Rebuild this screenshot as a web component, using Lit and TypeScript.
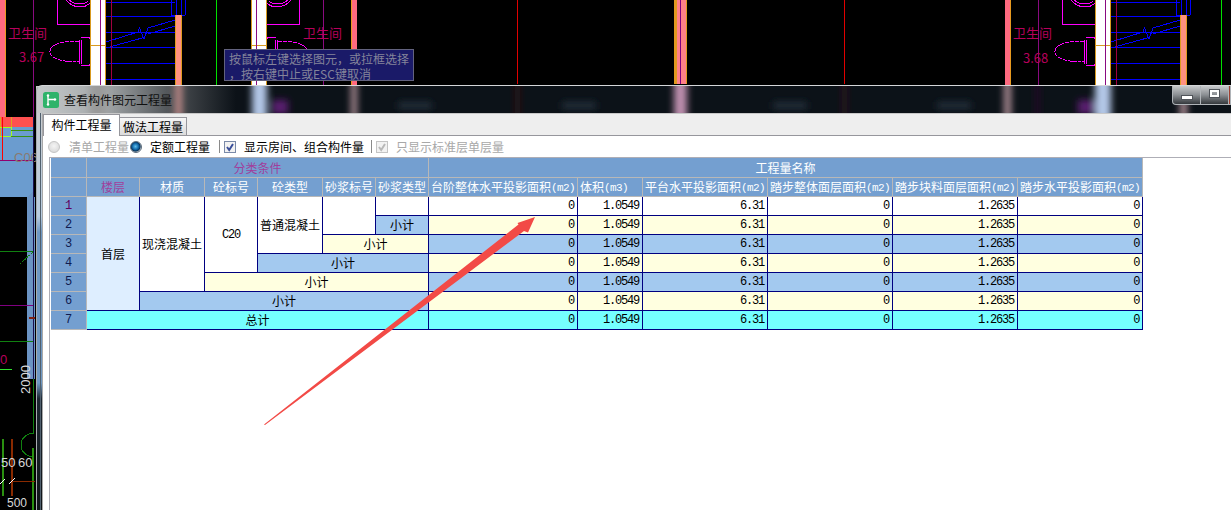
import { LitElement, html, css, svg } from 'lit';
import { customElement } from 'lit/decorators.js';

const CJK = '"Noto Sans CJK SC", "Liberation Sans", sans-serif';
const LATIN = '"Liberation Sans", sans-serif';

// one bathroom of the drawing, mirrored for the middle one
const room = (t: string) => svg`
  <g transform=${t} fill="none">
    <rect x="0" y="0" width="6" height="117" fill="#ff6a80" stroke="none" />
    <rect x="5" y="0" width="1" height="117" fill="#e89a20" stroke="none" />
    <path d="M33.5 0V117" stroke="#8a0a80" />
    <path d="M57.5 0V24.5H90" stroke="#ff00ff" />
    <path d="M66 0Q72 7 80 7Q86 7 90 3M69 0Q74 4 80 4Q85 4 88 1" stroke="#ff00ff" />
    <path d="M79 41C60 41 50 45 50 51.5C50 58 60 62 79 62" stroke="#ff00ff" stroke-dasharray="4 1" />
    <path d="M79.5 39.5V63.5M81.5 39.5V63.5M81 37.5H87Q90 37.5 90 39M81 65.5H87Q90 65.5 90 64" stroke="#ff00ff" />
    <rect x="90" y="0" width="16" height="85" fill="#fff" stroke="none" />
    <path d="M90.5 0V85M105.5 0V85M90 45.5H106" stroke="#d89a20" />
    <path d="M100.5 0V85" stroke="#8a0a80" />
  </g>
`;

const stairs = (t: string) => svg`
  <g transform=${t} fill="none">
    <path d="M106 16.5H175M106 32.5H175M106 47.5H175M106 63.5H175M106 79.5H175M106 2.5H175" stroke="#0000ff" />
    <path d="M106 42L138 32L139.5 28L144 39L148 28L175 20M106 48L144 37.5M148 34L175 26" stroke="#0000ff" />
    <path d="M171.5 0V15M176 0V15M181.5 0V15M185.5 0V15M171 15.5H185" stroke="#0000ff" />
    <path d="M111.5 0V85" stroke="#a00040" />
    <rect x="175" y="15" width="7" height="70" fill="#ff9080" stroke="none" />
    <path d="M175.5 15V85M181.5 15V85" stroke="#e09a20" />
    <path d="M216.5 0V85" stroke="#00e000" />
  </g>
`;

const label = (x: number, y: number, s: string, size = 13) =>
  svg`<text x=${x} y=${y} fill="#b8005c" font-size=${size} font-family=${CJK}>${s}</text>`;

const plain = (x: number, y: number, s: string, size = 12) =>
  svg`<text x=${x} y=${y} fill="#d8d8d8" font-size=${size} font-family=${LATIN}>${s}</text>`;

@customElement('cad-backdrop')
class CadBackdrop extends LitElement {
  static styles = css`
    :host {
      display: block;
      width: 1231px;
      height: 510px;
      background: #000;
    }

    svg {
      display: block;
    }

    .tip {
      position: absolute;
      left: 224px;
      top: 49px;
      width: 190px;
      height: 32px;
      box-sizing: border-box;
      padding: 1px 0 0 4px;
      background: #1a1a68;
      border: 1px solid #62627e;
      color: #84849a;
      font: 12px/15px "Noto Sans CJK SC", sans-serif;
      white-space: pre;
    }
  `;

  render() {
    return html`
      <svg width="1231" height="510" viewBox="0 0 1231 510" shape-rendering="crispEdges">
        <defs>
          <filter id="soft" x="-50%" y="-50%" width="200%" height="200%">
            <feGaussianBlur stdDeviation="3.5" />
          </filter>
          <linearGradient id="rim" x1="0" x2="1" y1="0" y2="0">
            <stop offset="0" stop-color="#c6cacb" />
            <stop offset="0.35" stop-color="#a2a6a8" />
            <stop offset="0.7" stop-color="#484c50" />
            <stop offset="1" stop-color="#0c1218" />
          </linearGradient>
          <linearGradient id="side" x1="0" x2="0" y1="0" y2="1">
            <stop offset="0" stop-color="#c8ccd0" />
            <stop offset="0.26" stop-color="#b8cce0" />
            <stop offset="0.3" stop-color="#6e98c4" />
            <stop offset="0.68" stop-color="#6e98c4" />
            <stop offset="0.72" stop-color="#1c2630" />
            <stop offset="1" stop-color="#101418" />
          </linearGradient>
          <clipPath id="glass"><rect x="36" y="86" width="1195" height="27" /></clipPath>
        </defs>

        ${room('')} ${stairs('')} ${room('translate(357 0) scale(-1 1)')}
        ${room('translate(1005 0)')} ${stairs('translate(1005 0)')}
        ${label(8, 38, '卫生间')} ${label(19, 62, '3.67')}
        ${label(303, 38, '卫生间')}
        ${label(1013, 38, '卫生间')} ${label(1023, 63, '3.68')}

        <path d="M517.5 0V84M844.5 0V84" stroke="#e00000" />
        <rect x="674" y="0" width="13" height="84" fill="#ff8088" />
        <rect x="674" y="0" width="3" height="84" fill="#e09a20" />
        <rect x="686" y="0" width="1" height="84" fill="#e09a20" />
        <rect x="680" y="0" width="1" height="84" fill="#800080" />

        <!-- left edge, what is still visible of the plan behind the window -->
        <rect x="0" y="117" width="33" height="10" fill="#ff5050" />
        <rect x="0" y="127" width="33" height="70" fill="#6b9ccf" />
        <rect x="27" y="197" width="8" height="182" fill="#6b94c4" />
        <path d="M27 197L34 190V197Z" fill="#6b94c4" />
        <path d="M0.5 117V136M11.5 117V136" stroke="#e0a020" fill="none" />
        <path d="M0 127.5H11.5V136.5H0" stroke="#a0ff20" fill="none" />
        <path d="M11 130.5H33M11 136.5H33" stroke="#3a9010" />
        <path d="M2.5 117V160" stroke="#ff0000" />
        <path d="M0 160.5H33" stroke="#900070" />
        <text x="14" y="162" fill="#8a7a70" font-size="13" font-family=${LATIN}>C06</text>
        <path d="M33.5 117V379" stroke="#1a1050" />
        <path d="M33.5 379V433" stroke="#108010" />
        <path d="M0 251.5H33" stroke="#108010" />
        <path d="M20 264L33 252" stroke="#108010" stroke-dasharray="2 1" />
        <path d="M0 305.5H33" stroke="#800080" />
        <rect x="29" y="317" width="6" height="2" fill="#802010" />
        <path d="M0 341.5H33" stroke="#108010" />
        <path d="M0 369.5H12" stroke="#30e030" />
        <text x="0" y="364" fill="#b8005c" font-size="13" font-family=${LATIN}>0</text>
        <text transform="translate(30 394) rotate(-90)" fill="#d8d8d8" font-size="13" font-family=${LATIN}>2000</text>
        <path d="M34 433A13 12 0 1 0 34 457" stroke="#108010" fill="none" />
        <path d="M3 439V496" stroke="#2a9010" stroke-width="2" />
        <path d="M12 439V496" stroke="#8a2a00" stroke-width="2" />
        <path d="M33 448V510" stroke="#2a9010" stroke-width="2" />
        <path d="M12 481H35" stroke="#8a2a00" />
        <path d="M0 484L5 479M9 484L15 478" stroke="#fff" />
        ${plain(1, 467, '50', 13)} ${plain(18, 467, '60', 13)} ${plain(7, 507, '500', 12)}

        <!-- aero glass of the title bar -->
        <g shape-rendering="auto">
          <rect x="36" y="86" width="1195" height="27" fill="#0c1218" />
          <rect x="36" y="86" width="200" height="27" fill="url(#rim)" />
          <rect x="36" y="113" width="6" height="397" fill="url(#side)" />
          <path d="M40.5 113V510" stroke="#50606e" />
          <g clip-path="url(#glass)">
            <g filter="url(#soft)">
              <rect x="90" y="70" width="16" height="50" fill="#9a9a9a" />
              <rect x="175" y="70" width="7" height="50" fill="#c08a88" />
              <rect x="252" y="70" width="15" height="50" fill="#b4c8e8" />
              <rect x="272" y="100" width="16" height="14" fill="#5a1a70" />
              <rect x="351" y="70" width="6" height="50" fill="#b09098" />
              <rect x="516" y="70" width="3" height="50" fill="#401818" />
              <rect x="674" y="70" width="13" height="50" fill="#c090b0" />
              <rect x="843" y="70" width="3" height="50" fill="#401820" />
              <rect x="1004" y="70" width="7" height="50" fill="#b09098" />
              <rect x="1036" y="70" width="3" height="50" fill="#301030" />
              <rect x="1078" y="100" width="16" height="14" fill="#5a1a70" />
              <rect x="1095" y="70" width="16" height="50" fill="#b4c8e8" />
              <rect x="1180" y="70" width="7" height="50" fill="#b09098" />
              <rect x="398" y="102" width="34" height="7" fill="#222e3a" />
              <rect x="562" y="102" width="34" height="7" fill="#222e3a" />
              <rect x="773" y="102" width="34" height="7" fill="#222e3a" />
              <rect x="937" y="102" width="34" height="7" fill="#222e3a" />
            </g>
          </g>
        </g>
      </svg>
      <div class="tip">按鼠标左键选择图元，或拉框选择
，按右键中止或ESC键取消</div>
    `;
  }
}

type Cell = { t: string; cls?: string; rs?: number; cs?: number };

const COLUMNS = [36, 53, 65, 53, 65, 53, 53, 149, 65, 125, 125, 125, 125];
const CONDITIONS = ['材质', '砼标号', '砼类型', '砂浆标号', '砂浆类型'];
const MEASURES = [
  '台阶整体水平投影面积',
  '体积',
  '平台水平投影面积',
  '踏步整体面层面积',
  '踏步块料面层面积',
  '踏步水平投影面积',
];
const UNITS = ['(m2)', '(m3)', '(m2)', '(m2)', '(m2)', '(m2)'];
const VALUES = ['0', '1.0549', '6.31', '0', '1.2635', '0'];

const ROWS: { fill: string; cond: Cell[] }[] = [
  {
    fill: 'white',
    cond: [
      { t: '首层', rs: 6, cls: 'floor' },
      { t: '现浇混凝土', rs: 5, cls: 'white' },
      { t: 'C20', rs: 4, cls: 'white' },
      { t: '普通混凝土', rs: 3, cls: 'white' },
      { t: '', rs: 2, cls: 'white' },
      { t: '', cls: 'white' },
    ],
  },
  { fill: 'yellow', cond: [{ t: '小计', cls: 'blue' }] },
  { fill: 'blue', cond: [{ t: '小计', cs: 2, cls: 'yellow' }] },
  { fill: 'yellow', cond: [{ t: '小计', cs: 3, cls: 'blue' }] },
  { fill: 'blue', cond: [{ t: '小计', cs: 4, cls: 'yellow' }] },
  { fill: 'yellow', cond: [{ t: '小计', cs: 5, cls: 'blue' }] },
  { fill: 'cyan', cond: [{ t: '总计', cs: 6, cls: 'cyan' }] },
];

@customElement('quantity-window')
class QuantityWindow extends LitElement {
  static styles = css`
    :host {
      position: absolute;
      left: 36px;
      top: 85px;
      width: 1195px;
      height: 425px;
      display: flex;
      flex-direction: column;
      font: 12px/18px "Noto Sans CJK SC", "Liberation Sans", sans-serif;
      color: #000;
      border-top: 1px solid #d4d6d8;
      border-left: 1px solid #a8acb0;
      border-top-left-radius: 6px;
      box-sizing: border-box;
      overflow: hidden;
    }

    .title {
      flex: none;
      height: 27px;
      display: flex;
      align-items: center;
      gap: 5px;
      padding-left: 6px;
      color: #101010;
      position: relative;
    }

    .logo {
      display: block;
    }

    .buttons {
      position: absolute;
      right: 0;
      top: 0;
      display: flex;
      height: 19px;
    }

    .btn {
      width: 27px;
      height: 18px;
      display: flex;
      align-items: center;
      justify-content: center;
      background: linear-gradient(#c8cacc, #8a8e92 50%, #34383c);
      border: 1px solid #b0b4b8;
      border-top: none;
      box-sizing: content-box;
      margin-left: -1px;
    }

    .btn.min {
      border-bottom-left-radius: 4px;
    }

    .btn.close {
      width: 1px;
      background: #a04030;
    }

    .min-glyph {
      width: 10px;
      height: 3px;
      background: #fff;
      border: 1px solid #50545a;
      margin-top: 4px;
    }

    .max-glyph {
      width: 5px;
      height: 3px;
      border: 2px solid #fff;
      outline: 1px solid #50545a;
      margin-top: -3px;
    }

    .client {
      flex: 1;
      margin-left: 5px;
      background: #fff;
      border-top: 1px solid #c8c8c8;
      border-left: 1px solid #a8a8a8;
      display: flex;
      flex-direction: column;
      min-height: 0;
    }

    .tabs {
      flex: none;
      height: 21px;
      background: #eeeeee;
      border-bottom: 1px solid #96969c;
      display: flex;
      align-items: flex-end;
      box-sizing: content-box;
    }

    .tab {
      box-sizing: border-box;
      text-align: center;
      border: 1px solid #96969c;
      border-bottom: none;
    }

    .tab.on {
      width: 77px;
      height: 22px;
      margin-bottom: -1px;
      background: #fff;
      line-height: 20px;
      position: relative;
    }

    .tab.off {
      width: 68px;
      height: 18px;
      margin-left: -1px;
      line-height: 17px;
      background: linear-gradient(#f6f6f6, #dcdcdc);
    }

    .bar {
      flex: none;
      height: 21px;
      display: flex;
      align-items: center;
      padding-left: 5px;
    }

    .radio {
      width: 12px;
      height: 12px;
      border-radius: 50%;
      box-sizing: border-box;
      border: 1px solid #c4c4c4;
      background: radial-gradient(circle at 50% 40%, #f4f4f4, #d4d4d4);
    }

    .radio.on {
      border: 1px solid #5a6a7a;
      background: radial-gradient(circle at 45% 45%, #5cc0f0, #0a5a9a 45%, #0a3050 60%, #d0d8e0 72%);
    }

    .check {
      width: 12px;
      height: 12px;
      display: block;
    }

    .sep {
      width: 1px;
      height: 13px;
      background: #8a8a8a;
    }

    .off-text {
      color: #a8a8a8;
    }

    .gap-1 {
      margin-left: 1px;
    }

    .gap-4 {
      margin-left: 4px;
    }

    .gap-7 {
      margin-left: 7px;
    }

    .gap-8 {
      margin-left: 8px;
    }

    .gap-9 {
      margin-left: 9px;
    }

    .panel {
      flex: 1;
      margin-left: 6px;
      padding-left: 1px;
      border-top: 1px solid #aeaeb6;
      border-left: 1px solid #aeaeb6;
    }

    table {
      table-layout: fixed;
      width: 1092px;
      border-collapse: separate;
      border-spacing: 0;
    }

    td,
    th {
      box-sizing: border-box;
      height: 19px;
      padding: 0;
      font-weight: 400;
      text-align: center;
      vertical-align: middle;
      white-space: nowrap;
      overflow: hidden;
      line-height: 18px;
      border-right: 1px solid #000080;
      border-bottom: 1px solid #000080;
    }

    tr.head-top th {
      height: 20px;
    }

    th {
      background: #749fd0;
      color: #fff;
      border-color: #b8b8b8;
    }

    th.accent {
      color: #a0409c;
    }

    th.measure {
      text-align: left;
      padding-left: 2px;
    }

    th.index {
      font: 12px/18px "Liberation Mono", monospace;
      color: #101c50;
    }

    th.index.first {
      color: #600060;
    }

    .unit {
      display: inline-block;
      vertical-align: top;
      height: 18px;
      font: 11px/20px "Liberation Mono", monospace;
      letter-spacing: -0.6px;
    }

    td.white {
      background: #fff;
    }

    td.yellow {
      background: #ffffe0;
    }

    td.blue {
      background: #a3c9ef;
    }

    td.cyan {
      background: #75ffff;
    }

    td.floor {
      background: #deeeff;
    }

    td.num {
      text-align: right;
      padding-right: 3px;
      font: 12px/18px "Liberation Mono", monospace;
      letter-spacing: -1.2px;
    }

    td.code {
      font: 12px/18px "Liberation Mono", monospace;
      letter-spacing: -1.2px;
    }
  `;

  private check(color: string, edge: string) {
    return html`<svg class="check gap-4" viewBox="0 0 12 12">
      <rect x="0.5" y="0.5" width="11" height="11" fill="#f2f2f2" stroke=${edge} />
      <path d="M3 6L5.2 9L9 3" fill="none" stroke=${color} stroke-width="2" />
    </svg>`;
  }

  render() {
    return html`
      <div class="title">
        <svg class="logo" width="16" height="16" viewBox="0 0 16 16">
          <rect width="16" height="16" rx="2.5" fill="#2fb36a" />
          <path d="M5 3.5V12.5M5 7.5H12" stroke="#fff" stroke-width="1.4" fill="none" />
          <circle cx="5" cy="3.5" r="1.2" fill="#fff" />
          <circle cx="5" cy="12.5" r="1.2" fill="#fff" />
          <circle cx="12" cy="7.5" r="1.2" fill="#fff" />
        </svg>
        <span>查看构件图元工程量</span>
        <div class="buttons">
          <div class="btn min"><div class="min-glyph"></div></div>
          <div class="btn"><div class="max-glyph"></div></div>
          <div class="btn close"></div>
        </div>
      </div>
      <div class="client">
        <div class="tabs">
          <div class="tab on">构件工程量</div>
          <div class="tab off">做法工程量</div>
        </div>
        <div class="bar">
          <div class="radio"></div>
          <span class="off-text gap-9">清单工程量</span>
          <div class="radio on gap-1"></div>
          <span class="gap-8">定额工程量</span>
          <div class="sep gap-9"></div>
          ${this.check('#3a4f9a', '#7a8aa8')}
          <span class="gap-8">显示房间、组合构件量</span>
          <div class="sep gap-7"></div>
          ${this.check('#b8b8b8', '#c4c4c4')}
          <span class="off-text gap-8">只显示标准层单层量</span>
        </div>
        <div class="panel">
          <table>
            <colgroup>
              ${COLUMNS.map((w) => html`<col style="width:${w}px" />`)}
            </colgroup>
            <tr class="head-top">
              <th></th>
              <th class="accent" colspan="6">分类条件</th>
              <th colspan="6">工程量名称</th>
            </tr>
            <tr>
              <th></th>
              <th class="accent">楼层</th>
              ${CONDITIONS.map((c) => html`<th>${c}</th>`)}
              ${MEASURES.map(
                (m, i) => html`<th class="measure">${m}<span class="unit">${UNITS[i]}</span></th>`
              )}
            </tr>
            ${ROWS.map(
              (row, r) => html`
                <tr>
                  <th class="index ${r === 0 ? 'first' : ''}">${r + 1}</th>
                  ${row.cond.map(
                    (c) => html`<td
                      class="${c.cls} ${c.t === 'C20' ? 'code' : ''}"
                      rowspan=${c.rs ?? 1}
                      colspan=${c.cs ?? 1}
                    >${c.t}</td>`
                  )}
                  ${VALUES.map((v) => html`<td class="num ${row.fill}">${v}</td>`)}
                </tr>
              `
            )}
          </table>
        </div>
      </div>
    `;
  }
}

@customElement('app-root')
class AppRoot extends LitElement {
  static styles = css`
    :host {
      display: block;
      position: relative;
      width: 1231px;
      height: 510px;
      overflow: hidden;
    }

    .arrow {
      position: absolute;
      left: 0;
      top: 0;
      pointer-events: none;
    }
  `;

  render() {
    return html`
      <cad-backdrop></cad-backdrop>
      <quantity-window></quantity-window>
      <svg class="arrow" width="1231" height="510" viewBox="0 0 1231 510">
        <path d="M264 424.5L518.5 224.5L517.5 223L535 217L528 232.5L524 231L265 425Z" fill="#f24a46" />
      </svg>
    `;
  }
}
